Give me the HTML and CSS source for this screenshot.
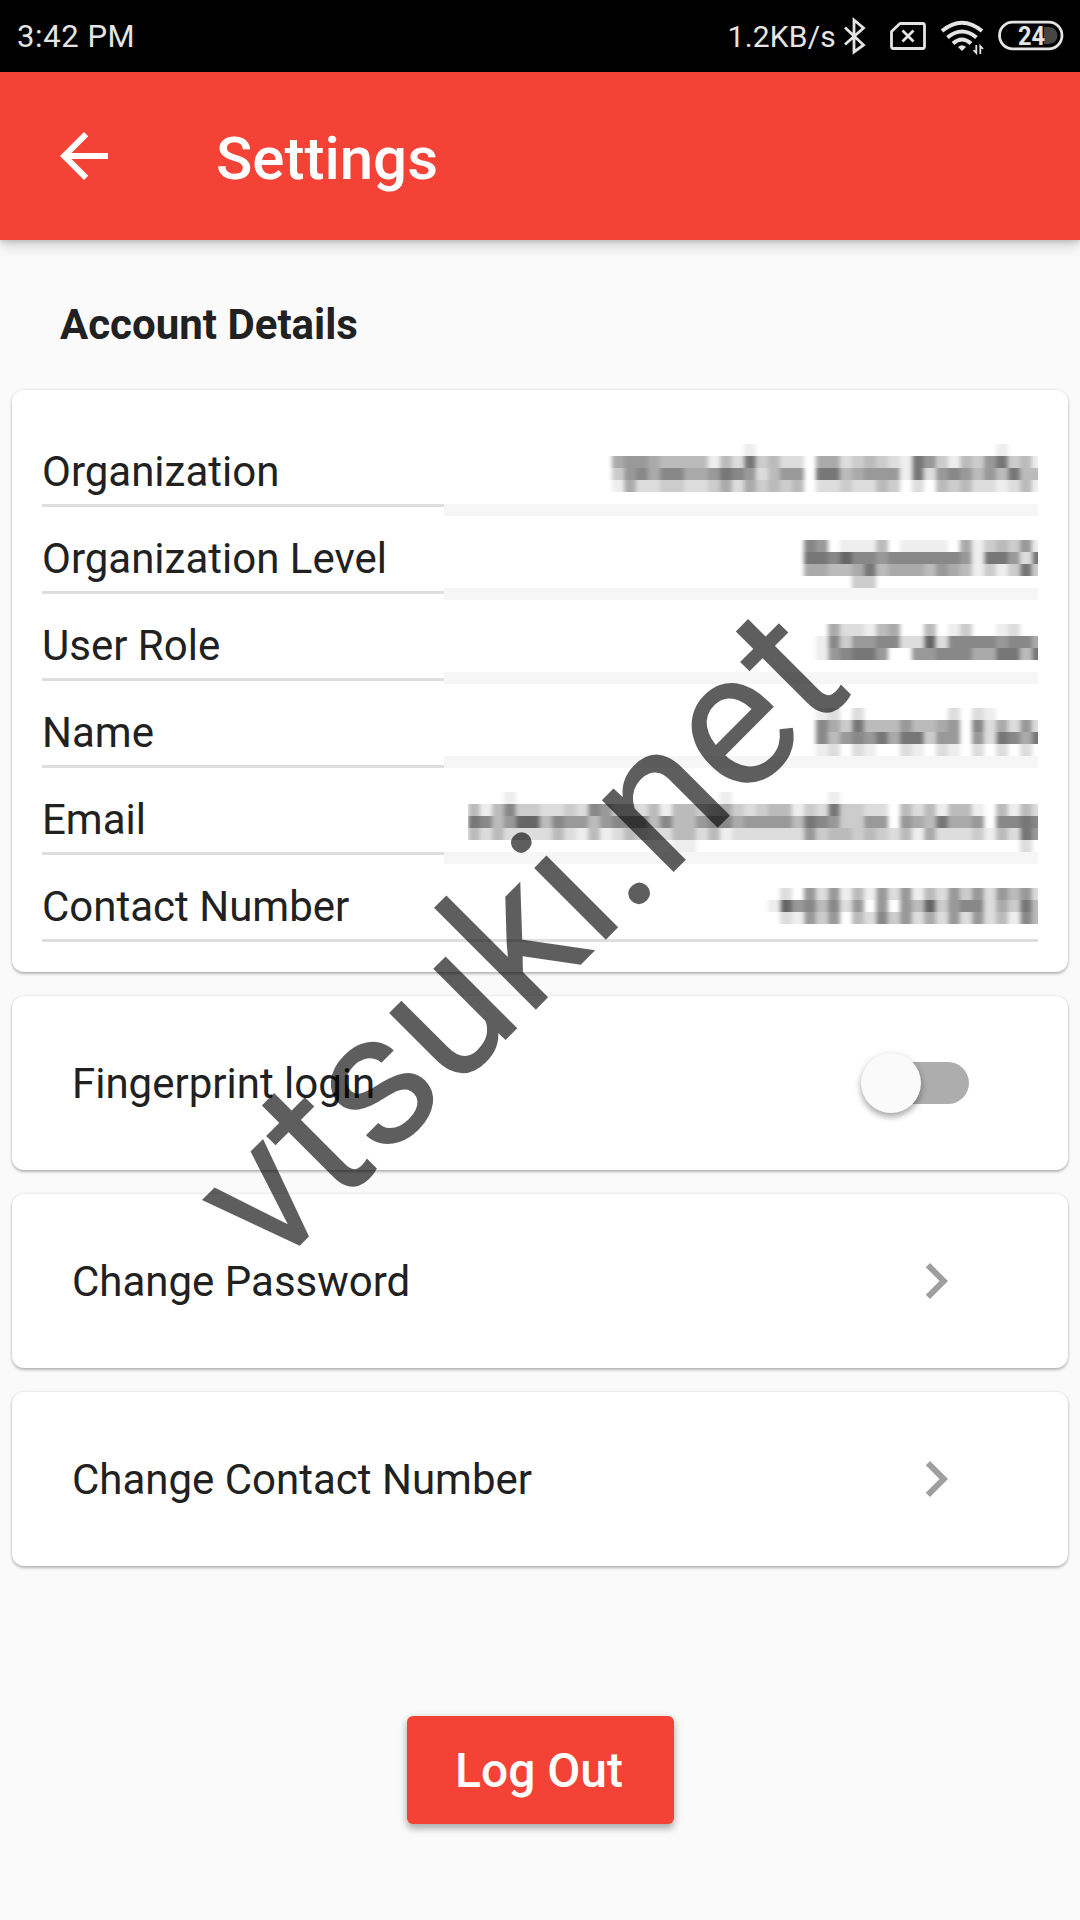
FILE: index.html
```html
<!DOCTYPE html>
<html lang="en">
<head>
<meta charset="utf-8">
<title>Settings</title>
<link rel="stylesheet" href="styles.css">
</head>
<body>
<div class="screen">
  <div class="status-bar">
    <span class="time">3:42 PM</span>
    <div class="status-right">
      <span class="speed">1.2KB/s</span>
      <svg class="status-icons" width="236" height="72" viewBox="844 0 236 72" fill="none" stroke="#e4e4e4">
        <path d="M845 27.5 L863.500 45 L854 52 V20 L863.500 28 L845 44.500" stroke-width="2.8"/>
        <path d="M900 23.500 H922.500 Q924.500 23.500 924.500 25.500 V46.500 Q924.500 48.500 922.500 48.500 H893.500 Q891.500 48.500 891.500 46.500 V31.500 Z" stroke-width="2.8" stroke-linejoin="round"/>
        <path d="M902.500 30.500 L913.500 41.500 M913.500 30.500 L902.500 41.500" stroke-width="2.8"/>
        <path d="M942 31 Q962 14.500 982 31 M947.500 37.500 Q962 25.500 976.500 37.500 M953 43.500 Q962 35.500 971 43.500" stroke-width="4"/>
        <path d="M958 47 Q962 43.500 966 47 L962 51 Z" fill="#e4e4e4" stroke="none"/>
        <path d="M976.300 45 V53 L973.500 50 M980.300 54 V46 L983 49" stroke-width="1.800"/>
        <path d="M1044 27 H1049 A8.500 8.500 0 0 1 1049 44 H1044 Z" fill="#454545" stroke="none"/>
        <rect x="999.500" y="22.200" width="62.500" height="26.600" rx="13.300" stroke-width="2.8"/>
        <text class="battery-text" x="1018" y="44.500" textLength="27" lengthAdjust="spacingAndGlyphs">24</text>
      </svg>
    </div>
  </div>
  <header class="app-bar">
    <svg class="icon" viewBox="0 0 24 24" fill="#fff"><path d="M20 11H7.830l5.590-5.590L12 4l-8 8 8 8 1.410-1.410L7.830 13H20v-2z"/></svg>
    <h1 class="title">Settings</h1>
  </header>
  <main class="content">
    <h2 class="section-title">Account Details</h2>
    <section class="card details">
      <div class="detail">Organization</div>
      <div class="detail">Organization Level</div>
      <div class="detail">User Role</div>
      <div class="detail">Name</div>
      <div class="detail">Email</div>
      <div class="detail">Contact Number</div>
      <svg class="mosaic" width="594" height="492" viewBox="444 444 594 492" shape-rendering="crispEdges">
        <filter id="soften" x="0" y="0" width="1" height="1"><feGaussianBlur stdDeviation="2.2 0.6"/></filter>
        <g class="strips"></g>
        <g class="cells" filter="url(#soften)"></g>
      </svg>
    </section>
    <section class="card action">
      <span>Fingerprint login</span>
      <span class="switch"><span class="thumb"></span></span>
    </section>
    <section class="card action">
      <span>Change Password</span>
      <svg class="icon" viewBox="0 0 24 24" fill="#9e9e9e"><path d="M10 6L8.590 7.410 13.170 12l-4.580 4.590L10 18l6-6z"/></svg>
    </section>
    <section class="card action">
      <span>Change Contact Number</span>
      <svg class="icon" viewBox="0 0 24 24" fill="#9e9e9e"><path d="M10 6L8.590 7.410 13.170 12l-4.580 4.590L10 18l6-6z"/></svg>
    </section>
    <button class="logout">Log Out</button>
  </main>
  <svg class="watermark" width="1080" height="1920" viewBox="0 0 1080 1920">
    <text transform="translate(271.500 1274) rotate(-45)">vtsuki.net</text>
  </svg>
</div>
<script src="mosaic.js"></script>
</body>
</html>
```
FILE: styles.css
```css
* { box-sizing: border-box; }
body {
  margin: 0;
  background: #fafafa;
  color: #212121;
  font-family: Roboto, sans-serif;
}
.screen {
  position: relative;
  width: 1080px;
  height: 1920px;
  overflow: hidden;
}
.status-bar {
  display: flex;
  justify-content: space-between;
  height: 72px;
  padding-left: 17px;
  background: #000;
  color: #e4e4e4;
  font-size: 31px;
  line-height: 74px;
}
.time { letter-spacing: 0.6px; }
.status-right { display: flex; gap: 8px; }
.speed { font-size: 30px; line-height: 73px; letter-spacing: 0.2px; }
.status-icons { display: block; }
.battery-text {
  fill: #e4e4e4;
  stroke: none;
  font-size: 26px;
  font-weight: 700;
}
.icon { display: block; width: 72px; height: 72px; }
.app-bar {
  position: relative;
  display: flex;
  align-items: center;
  gap: 96px;
  height: 168px;
  padding: 0 48px;
  background: #f44336;
  color: #fff;
  box-shadow: 0 6px 12px rgba(0, 0, 0, 0.16), 0 2px 4px rgba(0, 0, 0, 0.12);
}
.title {
  margin: 5px 0 0;
  font-size: 60px;
  font-weight: 500;
  line-height: 70px;
}
.content {
  display: flex;
  flex-direction: column;
  gap: 24px;
  padding: 60px 12px 0;
}
.section-title {
  margin: 0 0 17px 48px;
  font-size: 42px;
  font-weight: 700;
  line-height: 49px;
}
.card {
  border-radius: 12px;
  background: #fff;
  box-shadow: 0 2px 3px rgba(0, 0, 0, 0.25), 0 0 3px rgba(0, 0, 0, 0.12);
  font-size: 42px;
  line-height: 49px;
}
.details {
  position: relative;
  height: 582px;
  padding: 30px 30px 0;
}
.detail {
  height: 87px;
  padding-top: 27px;
  border-bottom: 3px solid #dedede;
}
.mosaic {
  position: absolute;
  top: 54px;
  right: 30px;
}
.action {
  display: flex;
  align-items: center;
  justify-content: space-between;
  height: 174px;
  padding: 0 96px 0 60px;
}
.switch {
  display: flex;
  align-items: center;
  width: 99px;
  height: 42px;
  margin-right: 3px;
  border-radius: 21px;
  background: #adadad;
}
.thumb {
  flex: none;
  width: 60px;
  height: 60px;
  margin-left: -9px;
  border-radius: 50%;
  background: #fafafa;
  box-shadow: 0 4px 6px rgba(0, 0, 0, 0.3), 0 1px 9px rgba(0, 0, 0, 0.08);
}
.logout {
  align-self: center;
  width: 267px;
  height: 108px;
  margin-top: 126px;
  padding: 0 2px 0 0;
  border: 0;
  border-radius: 6px;
  background: #f44336;
  color: #fff;
  font: 500 48px/110px Roboto, sans-serif;
  box-shadow: 0 5px 7px rgba(0, 0, 0, 0.25), 0 1px 8px rgba(0, 0, 0, 0.12);
}
.watermark {
  position: absolute;
  top: 0;
  left: 0;
  pointer-events: none;
}
.watermark text {
  font-family: Roboto, sans-serif;
  font-size: 192px;
  fill: rgba(0, 0, 0, 0.63);
}
```
FILE: mosaic.js
```js
// Obscured account values: one hex digit of grey per 12px cell, f is white.
const CELL = 12;
const blocks = [
  { x: 612, y: 444, rows: [
    "fffffffffffeffffffffffffffffffffefff",
    "a99abbbbebd7cbddfaadcbcde79cebc97cbe",
    "c98a88aa9789db99f77ba999e7d989b9b7bb",
    "eaddccddcadacbcbfddcddbcfdfbcbddedbe"] },
  { x: 804, y: 540, rows: [
    "89feeebfeeeefaecbc9e",
    "77868898888889e779d7",
    "aabba7baaab9abecec7c",
    "ffffccffffffffffffff"] },
  { x: 816, y: 624, rows: [
    "faddebaffbfecffedff",
    "e8c9988dd6d8888988a",
    "e98779ff99888aa77b7"] },
  { x: 816, y: 708, rows: [
    "edfdfffffffdfdeffff",
    "8ac7bbb9bba9f8dad9d",
    "8b9897a77c99f9d78a7",
    "edfdeffdefdefdfdfdf"] },
  { x: 456, y: 792, rows: [
    "ffffefffffffffffffffffeffffffffeffffffffffffffff",
    "fbeb8ccddcd89ccdbebbcbacdcbbecd7ccddfbdbebbefbebd",
    "f78b966b899b9888b8bb988a9999b789cc99f9ab7aa9f8878",
    "fbdbddddbdebedbcddbbdbedddddd9cbbcbcdbeadddcebd79",
    "ffffffffffffffffffeefffffffffffffffffffffffffffdf"] },
  { x: 768, y: 888, rows: [
    "fdf9d9ebe9d9ebd9c9d9b9d",
    "e698b8d9f9f9b6c988dac7b",
    "fde9c9fbd8c9dad9d9dbe8b"] }
];
const strips = document.querySelector(".strips");
const cells = document.querySelector(".cells");
function rect(parent, x, y, w, h, fill) {
  const r = document.createElementNS("http://www.w3.org/2000/svg", "rect");
  r.setAttribute("x", x);
  r.setAttribute("y", y);
  r.setAttribute("width", w);
  r.setAttribute("height", h);
  r.setAttribute("fill", fill);
  parent.append(r);
}
for (const y of [504, 588, 672, 756, 852]) rect(strips, 444, y, 594, CELL, "#f6f6f6");
for (const { x, y, rows } of blocks)
  rows.forEach((row, j) => [...row].forEach((v, i) => {
    if (v !== "f") rect(cells, x + i * CELL, y + j * CELL, CELL, CELL, `#${v}${v}${v}`);
  }));
```
